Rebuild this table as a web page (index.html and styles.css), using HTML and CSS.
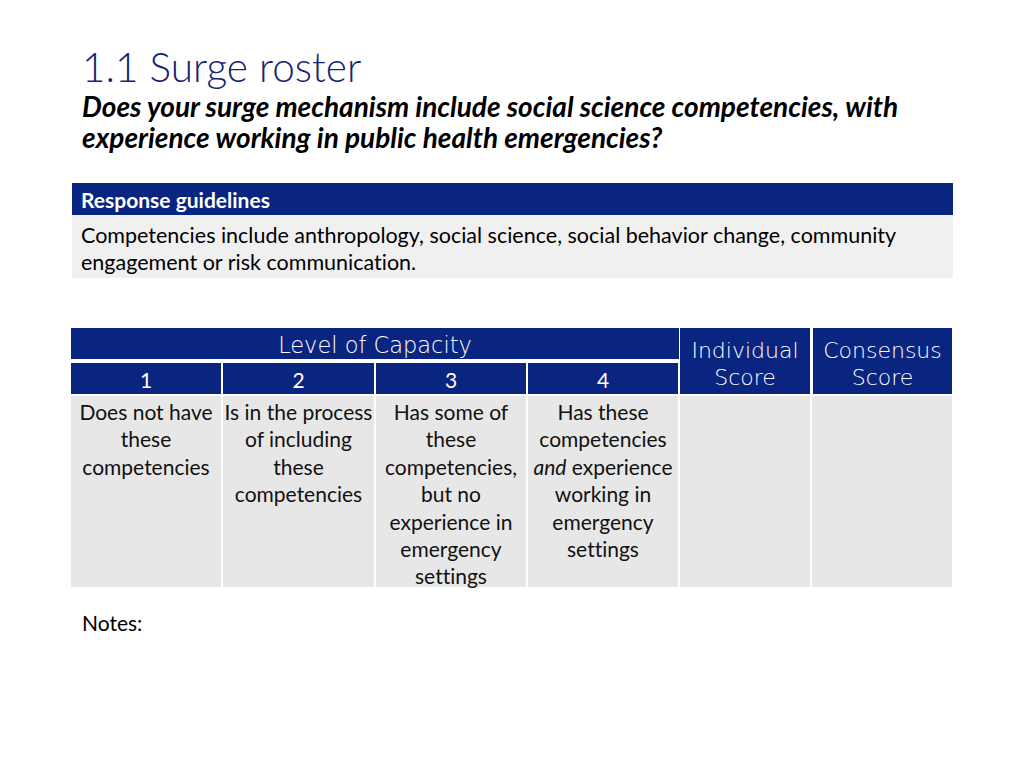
FILE: index.html
```html
<!DOCTYPE html>
<html>
<head>
<meta charset="utf-8">
<link rel="stylesheet" href="styles.css">
</head>
<body>
<div class="slide">
  <header class="head">
    <h1 class="title">1.1 Surge roster</h1>
    <p class="question">Does your surge mechanism include social science competencies, with experience working in public health emergencies?</p>
  </header>

  <section class="guide">
    <div class="guide-head">Response guidelines</div>
    <div class="guide-body">Competencies include anthropology, social science, social behavior change, community engagement or risk communication.</div>
  </section>

  <section class="matrix">
    <div class="cap-head">Level of Capacity</div>
    <div class="score-head ind">Individual<br>Score</div>
    <div class="score-head con">Consensus<br>Score</div>
    <div class="num">1</div>
    <div class="num">2</div>
    <div class="num">3</div>
    <div class="num last">4</div>
    <div class="cell">Does not have these competencies</div>
    <div class="cell">Is in the process of including these competencies</div>
    <div class="cell">Has some of these competencies, but no experience in emergency settings</div>
    <div class="cell">Has these competencies <em>and</em> experience working in emergency settings</div>
    <div class="cell"></div>
    <div class="cell"></div>
  </section>

  <p class="notes">Notes:</p>
</div>
</body>
</html>
```

FILE: styles.css
```css
html, body {
  margin: 0;
  padding: 0;
  background: #ffffff;
}

.slide {
  width: 1024px;
  height: 768px;
  box-sizing: border-box;
  padding-top: 43px;
  font-family: Lato, "Liberation Sans", sans-serif;
  font-variant-ligatures: none;
  color: #000;
  overflow: hidden;
}

.head {
  padding-left: 82px;
}

.title {
  margin: 0;
  font-family: Lato, sans-serif;
  font-weight: 300;
  font-size: 40.5px;
  line-height: 48px;
  color: #14266e;
}

.question {
  margin: 0;
  width: 860px;
  font-weight: 700;
  font-style: italic;
  font-size: 28px;
  line-height: 31px;
}

.guide {
  margin: 30px 0 0 72px;
  width: 881px;
}

.guide-head {
  height: 32px;
  line-height: 33px;
  background: #0a2580;
  color: #fff;
  font-weight: 700;
  font-size: 21px;
  padding-left: 9px;
}

.guide-body {
  box-sizing: border-box;
  background: #f0f0f0;
  padding: 7px 9px 0;
  font-size: 21.5px;
  line-height: 27px;
  height: 63px;
}

.matrix {
  margin: 50px 0 0 71px;
  width: 882px;
  display: grid;
  grid-template-columns: 150px 151px 150px 150px 130px 140px;
  grid-template-rows: 32px 32px 191px;
  column-gap: 2px;
  row-gap: 2px;
}

.cap-head {
  grid-column: 1 / 5;
  grid-row: 1;
  background: #0a2580;
  color: #fff;
  text-align: center;
  font-family: "DejaVu Sans", sans-serif;
  font-weight: 200;
  font-size: 22.5px;
  line-height: 34px;
  margin-right: -1px;
  border-bottom: 1px solid #fff;
}

.score-head {
  grid-row: 1 / 3;
  background: #0a2580;
  color: #fff;
  text-align: center;
  font-family: "DejaVu Sans", sans-serif;
  font-weight: 200;
  font-size: 22px;
  line-height: 27px;
  padding-top: 9px;
}

.score-head.ind {
  grid-column: 5;
}

.score-head.con {
  grid-column: 6;
  margin-left: 1px;
}

.num {
  grid-row: 2;
  background: #0a2580;
  color: #fff;
  text-align: center;
  font-size: 21px;
  line-height: 33px;
  margin-top: 1px;
}

.num.last {
  margin-right: -1px;
  border-right: 1px solid #fff;
}

.cell {
  background: #e7e7e7;
  text-align: center;
  font-size: 21px;
  line-height: 27.4px;
  padding-top: 2px;
  color: #111;
}

.cell em {
  font-style: italic;
}

.notes {
  margin: 22px 0 0 82px;
  font-size: 21px;
  line-height: 27px;
}
```
